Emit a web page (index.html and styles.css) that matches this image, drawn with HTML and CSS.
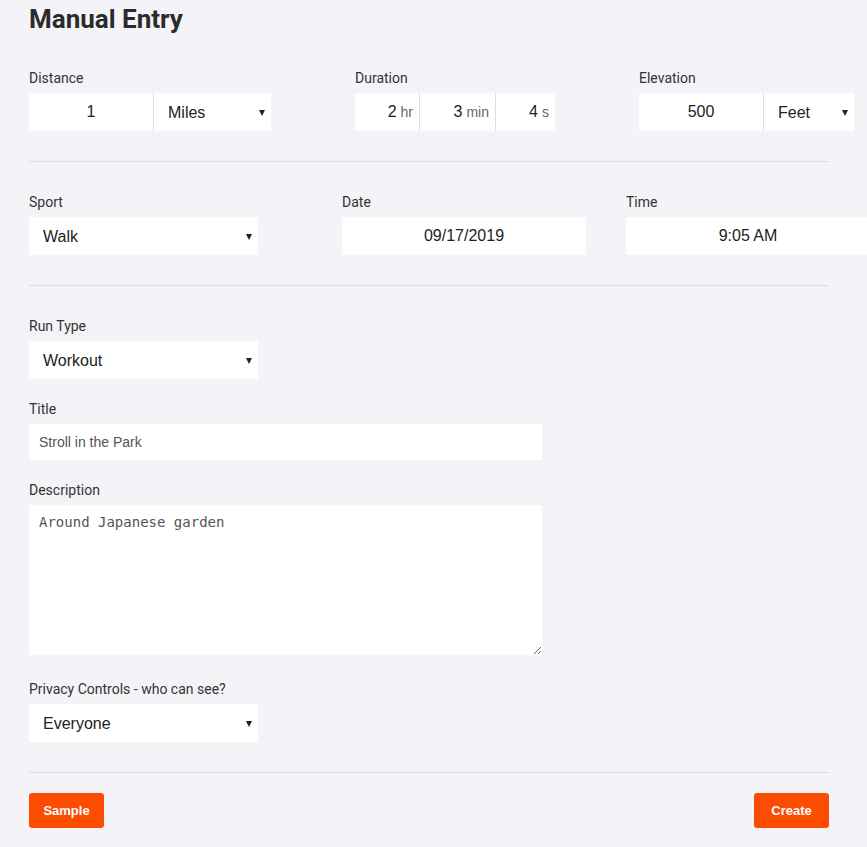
FILE: index.html
```html
<!DOCTYPE html>
<html>
<head>
<meta charset="utf-8">
<link rel="stylesheet" href="styles.css">
</head>
<body>
<main class="page">
  <h1 class="title">Manual Entry</h1>

  <section class="row row-stats">
    <div class="field">
      <label class="label">Distance</label>
      <div class="combo">
        <input class="num w-dist" value="1" readonly>
        <div class="select-wrap sel-miles"><select class="select"><option>Miles</option></select></div>
      </div>
    </div>
    <div class="field">
      <label class="label">Duration</label>
      <div class="combo">
        <div class="dur d-hr"><span class="dur-val">2</span><span class="dur-unit">hr</span></div>
        <div class="dur d-min"><span class="dur-val">3</span><span class="dur-unit">min</span></div>
        <div class="dur d-s"><span class="dur-val">4</span><span class="dur-unit">s</span></div>
      </div>
    </div>
    <div class="field">
      <label class="label">Elevation</label>
      <div class="combo">
        <input class="num w-dist" value="500" readonly>
        <div class="select-wrap sel-feet"><select class="select"><option>Feet</option></select></div>
      </div>
    </div>
  </section>

  <hr class="divider">

  <section class="row row-when">
    <div class="field f-sport">
      <label class="label">Sport</label>
      <div class="select-wrap sel-wide"><select class="select"><option>Walk</option></select></div>
    </div>
    <div class="field f-date">
      <label class="label">Date</label>
      <input class="num w-date" value="09/17/2019" readonly>
    </div>
    <div class="field">
      <label class="label">Time</label>
      <input class="num w-date" value="9:05 AM" readonly>
    </div>
  </section>

  <hr class="divider">

  <section class="stack">
    <div class="field group">
      <label class="label">Run Type</label>
      <div class="select-wrap sel-wide"><select class="select"><option>Workout</option></select></div>
    </div>
    <div class="field group">
      <label class="label">Title</label>
      <input class="text" value="Stroll in the Park" readonly>
    </div>
    <div class="field group group-desc">
      <label class="label">Description</label>
      <textarea class="area">Around Japanese garden</textarea>
    </div>
    <div class="field">
      <label class="label">Privacy Controls - who can see?</label>
      <div class="select-wrap sel-wide"><select class="select"><option>Everyone</option></select></div>
    </div>
  </section>

  <hr class="divider div-bottom">

  <footer class="actions">
    <button class="btn">Sample</button>
    <button class="btn">Create</button>
  </footer>
</main>
</body>
</html>
```

FILE: styles.css
```css
html, body {
  margin: 0;
  padding: 0;
  background: #f4f4f8;
  overflow: hidden;
}

.page {
  width: 800px;
  padding: 4px 0 0 29px;
  font-family: Roboto, "Liberation Sans", sans-serif;
  color: #333;
}

.title {
  margin: 0;
  font-size: 26px;
  line-height: 30px;
  font-weight: 700;
  color: #2b2b2b;
}

.row {
  display: flex;
  white-space: nowrap;
}

.row-stats {
  margin-top: 36px;
  gap: 84px;
}

.row-when {
  margin-top: 32px;
}

.f-sport { margin-right: 84px; }
.f-date { margin-right: 40px; }

.field {
  display: flex;
  flex-direction: column;
}

.label {
  font-size: 14px;
  line-height: 16px;
  color: #333;
  margin-bottom: 7px;
}

.combo {
  display: flex;
  background: #fff;
  height: 38px;
}

.num {
  box-sizing: border-box;
  height: 38px;
  border: none;
  outline: none;
  background: #fff;
  text-align: center;
  font-family: "Liberation Sans", Arial, sans-serif;
  font-size: 16px;
  color: #222;
  padding: 0;
  margin: 0;
}

.w-dist { width: 125px; border-right: 1px solid #ddd; }
.w-date { width: 244px; }

.select-wrap {
  position: relative;
  background: #fff;
  height: 38px;
}

.select-wrap::after {
  content: "";
  position: absolute;
  right: 6px;
  top: 17px;
  border-left: 3.5px solid transparent;
  border-right: 3.5px solid transparent;
  border-top: 6px solid #222;
  pointer-events: none;
}

.sel-miles { width: 117px; }
.sel-feet { width: 90px; }
.sel-wide { width: 229px; }

.select {
  -webkit-appearance: none;
  appearance: none;
  width: 100%;
  height: 38px;
  border: none;
  outline: none;
  background: transparent;
  font-family: "Liberation Sans", Arial, sans-serif;
  font-size: 16px;
  color: #222;
  padding: 0 0 0 14px;
  margin: 0;
}

.dur {
  box-sizing: border-box;
  height: 38px;
  display: flex;
  align-items: center;
  justify-content: flex-end;
  padding-right: 6px;
  gap: 4px;
  font-family: "Liberation Sans", Arial, sans-serif;
  border-right: 1px solid #ddd;
}

.d-hr { width: 65px; }
.d-min { width: 76px; }
.d-s { width: 59px; border-right: none; }

.dur-val {
  font-size: 16px;
  color: #222;
}

.dur-unit {
  font-size: 14px;
  color: #666;
}

.divider {
  margin: 30px 0 0;
  border: none;
  height: 1px;
  background: #ddd;
}

.stack {
  margin-top: 32px;
  display: flex;
  flex-direction: column;
}

.group { margin-bottom: 22px; }
.group-desc { margin-bottom: 26px; }

.text {
  box-sizing: border-box;
  width: 513px;
  height: 36px;
  border: none;
  outline: none;
  background: #fff;
  padding: 0 10px;
  margin: 0;
  font-family: "Liberation Sans", Arial, sans-serif;
  font-size: 14px;
  color: #555;
}

.area {
  display: block;
  box-sizing: border-box;
  width: 513px;
  height: 150px;
  border: none;
  outline: none;
  background: #fff;
  padding: 8px 10px;
  margin: 0;
  font-family: "DejaVu Sans Mono", monospace;
  font-size: 14px;
  line-height: 18px;
  color: #555;
}

.div-bottom { margin-top: 30px; }

.actions {
  display: flex;
  justify-content: space-between;
  margin-top: 20px;
}

.btn {
  width: 75px;
  height: 35px;
  border: none;
  border-radius: 3px;
  background: #fc4c02;
  color: #fff;
  font-family: "Liberation Sans", Arial, sans-serif;
  font-weight: 700;
  font-size: 13px;
  padding: 0;
}
```
